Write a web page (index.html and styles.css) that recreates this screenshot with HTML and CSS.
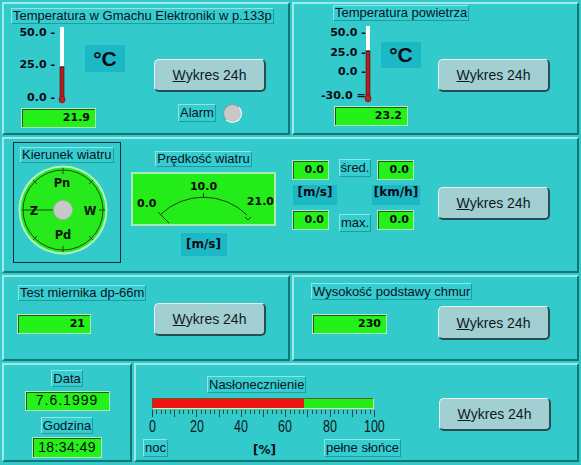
FILE: index.html
```html
<!DOCTYPE html>
<html lang="pl">
<head>
<meta charset="utf-8">
<title>Stacja meteorologiczna</title>
<link rel="stylesheet" href="styles.css">
</head>
<body>
<main class="screen">
  <div class="row halves">
    <section class="panel temp t1">
      <div class="lbl title">Temperatura w Gmachu Elektroniki w p.133p</div>
      <div class="scale">
        <div class="marks"><span>50.0 -</span><span>25.0 -</span><span>0.0 -</span></div>
        <svg class="tube" width="8" height="78" viewBox="0 0 8 78">
          <rect x="2" y="1" width="4" height="40" fill="#ffffff"/>
          <rect x="2" y="41" width="4" height="32" fill="#b01e1e" stroke="#4a1010" stroke-width="0.6"/>
          <line x1="2" y1="41" x2="6" y2="41" stroke="#1a1a1a" stroke-width="1"/>
          <ellipse cx="4" cy="73.5" rx="3" ry="3.5" fill="#c41f1f" stroke="#5a1414" stroke-width="0.6"/>
        </svg>
      </div>
      <div class="unit">°C</div>
      <button class="btn"><span class="u">W</span>ykres 24h</button>
      <div class="val">21.9</div>
      <div class="alarm"><span class="lbl">Alarm</span><span class="led"></span></div>
    </section>

    <section class="panel temp t2">
      <div class="lbl title">Temperatura powietrza</div>
      <div class="scale">
        <div class="marks"><span>50.0 -</span><span>25.0 -</span><span>0.0 -</span><span>-30.0 =</span></div>
        <svg class="tube" width="8" height="77" viewBox="0 0 8 77">
          <rect x="2" y="0" width="4" height="25" fill="#ffffff"/>
          <rect x="2" y="25" width="4" height="47" fill="#b01e1e" stroke="#4a1010" stroke-width="0.6"/>
          <line x1="2" y1="25" x2="6" y2="25" stroke="#1a1a1a" stroke-width="1"/>
          <ellipse cx="4" cy="72.5" rx="3" ry="3.5" fill="#c41f1f" stroke="#5a1414" stroke-width="0.6"/>
        </svg>
      </div>
      <div class="unit">°C</div>
      <button class="btn"><span class="u">W</span>ykres 24h</button>
      <div class="val">23.2</div>
    </section>
  </div>

  <section class="panel mid">
    <div class="wind">
      <div class="lbl">Kierunek wiatru</div>
      <svg class="compass" width="90" height="90" viewBox="0 0 90 90">
        <circle cx="45" cy="45" r="44.5" fill="#b4f2bc"/>
        <circle cx="45" cy="45" r="42.5" fill="#26ea1c"/>
        <circle cx="45" cy="45" r="40" fill="none" stroke="#1d4a1d" stroke-width="1"/>
        <g stroke="#1d4a1d" stroke-width="1">
          <line x1="45" y1="3" x2="45" y2="9"/>
          <line x1="45" y1="81" x2="45" y2="87"/>
          <line x1="81" y1="45" x2="87" y2="45"/>
          <line x1="71" y1="19" x2="75" y2="15"/>
          <line x1="19" y1="19" x2="15" y2="15"/>
          <line x1="71" y1="71" x2="75" y2="75"/>
          <line x1="19" y1="71" x2="15" y2="75"/>
          <line x1="4" y1="45" x2="45" y2="45"/>
        </g>
        <circle cx="45" cy="45" r="9.5" fill="#c8c8c8" stroke="#a8b0a8" stroke-width="0.8"/>
        <text class="ctext" x="44" y="22" text-anchor="middle">Pn</text>
        <text class="ctext" x="45" y="74" text-anchor="middle">Pd</text>
        <text class="ctext" x="72" y="49.5" text-anchor="middle">W</text>
        <text class="ctext" x="16" y="49.5" text-anchor="middle">Z</text>
      </svg>
    </div>

    <div class="speed">
      <div class="lbl">Prędkość wiatru</div>
      <div class="gauge">
        <svg width="141" height="50" viewBox="0 0 141 50">
          <g fill="none" stroke="#1d3d1d" stroke-width="1">
            <path d="M27 41 A62 62 0 0 1 114 41"/>
            <line x1="25" y1="38" x2="36" y2="49"/>
            <line x1="70.5" y1="19" x2="70.5" y2="24"/>
            <path d="M112 43 L115 46 L118 43"/>
          </g>
          <text class="gtext" x="70.5" y="16" text-anchor="middle">10.0</text>
          <text class="gtext" x="4" y="33">0.0</text>
          <text class="gtext" x="141" y="31" text-anchor="end">21.0</text>
        </svg>
      </div>
      <div class="unit-sm ms">[m/s]</div>
    </div>

    <div class="readout">
      <div class="val">0.0</div>
      <div class="lbl mini top">śred.</div>
      <div class="val c3">0.0</div>
      <div class="unit-sm u1">[m/s]</div>
      <div class="unit-sm u3">[km/h]</div>
      <div class="val r3">0.0</div>
      <div class="lbl mini bot">max.</div>
      <div class="val c3 r3">0.0</div>
    </div>

    <button class="btn"><span class="u">W</span>ykres 24h</button>
  </section>

  <div class="row halves">
    <section class="panel single s1">
      <div class="lbl title">Test miernika dp-66m</div>
      <div class="pair">
        <div class="val">21</div>
        <button class="btn"><span class="u">W</span>ykres 24h</button>
      </div>
    </section>
    <section class="panel single s2">
      <div class="lbl title">Wysokość podstawy chmur</div>
      <div class="pair">
        <div class="val">230</div>
        <button class="btn"><span class="u">W</span>ykres 24h</button>
      </div>
    </section>
  </div>

  <div class="row bottom">
    <section class="panel clock">
      <div class="lbl l-data">Data</div>
      <div class="val lcd date">7.6.1999</div>
      <div class="lbl l-godz">Godzina</div>
      <div class="val lcd time">18:34:49</div>
    </section>
    <section class="panel sun">
      <div class="insol">
        <div class="lbl">Nasłonecznienie</div>
        <div class="bar"><div class="fill" style="width:68.5%"></div></div>
        <div class="ticks"></div>
        <div class="nums"><span><i>0</i></span><span><i>20</i></span><span><i>40</i></span><span><i>60</i></span><span><i>80</i></span><span><i>100</i></span></div>
        <div class="legend">
          <span class="lbl">noc</span>
          <span class="pct">[%]</span>
          <span class="lbl">pełne słońce</span>
        </div>
      </div>
      <button class="btn"><span class="u">W</span>ykres 24h</button>
    </section>
  </div>
</main>
</body>
</html>
```

FILE: styles.css
```css
html, body {
  margin: 0;
  padding: 0;
}
body {
  background: #32caca;
  font-family: "Liberation Sans", Arial, sans-serif;
  font-size: 13px;
  color: #0a1222;
}
.screen {
  width: 581px;
  height: 465px;
  box-sizing: border-box;
  padding: 2px;
  display: grid;
  grid-template-rows: 133px 136px 86px 99px;
  row-gap: 2px;
  overflow: hidden;
}
.row {
  display: grid;
  column-gap: 2px;
}
.row.halves { grid-template-columns: 288px 287px; }
.row.bottom { grid-template-columns: 130px 445px; }

.panel {
  box-sizing: border-box;
  border: 2px solid;
  border-color: #9ee8e8 #117777 #117777 #9ee8e8;
  background: #32caca;
  min-width: 0;
  min-height: 0;
}

/* generic label box */
.lbl {
  box-sizing: border-box;
  height: 16px;
  line-height: 14px;
  padding: 0 1px;
  border: 1px solid;
  border-color: #8fe4e4 #1f9c9c #1f9c9c #8fe4e4;
  background: #36cdd0;
  white-space: nowrap;
  font-size: 13px;
}

/* green numeric display */
.val {
  box-sizing: border-box;
  width: 75px;
  height: 20px;
  background: #24f01a;
  border: 1px solid #b4ecbc;
  box-shadow: inset 1px 1px 0 #1f5a1f;
  font: bold 11px "DejaVu Sans", sans-serif;
  text-align: right;
  padding-right: 5px;
  line-height: 18px;
  color: #0a0a0a;
}

.unit {
  box-sizing: border-box;
  width: 40px;
  background: #1cb8c6;
  font: bold 21px "Liberation Sans", Arial, sans-serif;
  text-align: center;
  color: #0a0a14;
}
.unit-sm {
  box-sizing: border-box;
  height: 20px;
  line-height: 20px;
  background: #1cb8c6;
  font: bold 12px "DejaVu Sans", sans-serif;
  text-align: center;
  color: #0a0a14;
}

.btn {
  box-sizing: border-box;
  width: 112px;
  height: 33px;
  padding: 0;
  background: #a2d0d2;
  border: 1px solid;
  border-width: 1px 2px 2px 1px;
  border-color: #e4f6f6 #2b4d52 #2b4d52 #e4f6f6;
  border-radius: 5px;
  font: 14px "Liberation Sans", Arial, sans-serif;
  color: #101828;
  display: flex;
  align-items: center;
  justify-content: center;
}
.btn .u { text-decoration: underline; }

/* temperature panels */
.temp {
  display: grid;
  grid-template-rows: 20px 79px 1fr;
}
.t1 { grid-template-columns: 62px 84px 1fr; }
.t2 { grid-template-columns: 78px 64px 1fr; }
.temp .title {
  grid-column: 1 / -1;
  grid-row: 1;
  justify-self: start;
  align-self: start;
}
.t1 .title { margin: 4px 0 0 7px; }
.t2 .title { margin: 1px 0 0 39px; }

.scale {
  grid-column: 1;
  grid-row: 2;
  display: flex;
  align-items: flex-start;
  margin-top: 2px;
  align-self: start;
  justify-self: start;
}
.marks {
  display: grid;
  font: bold 11px "DejaVu Sans", sans-serif;
  line-height: 13px;
  text-align: right;
  color: #0a0a14;
  white-space: nowrap;
}
.t1 .marks {
  width: 41px;
  margin-left: 10px;
  grid-template-rows: 32px 33px 13px;
}
.t2 .marks {
  width: 43px;
  margin-left: 27px;
  grid-template-rows: 20px 19px 24px 13px;
}
.t1 .tube { margin-left: 3px; }
.t2 .tube { margin-left: 0; margin-top: 0; }

.temp .unit {
  grid-column: 2;
  grid-row: 2;
  align-self: start;
  justify-self: start;
}
.t1 .unit { margin: 21px 0 0 19px; height: 27px; line-height: 27px; }
.t2 .unit { margin: 18px 0 0 9px; height: 26px; line-height: 26px; }

.temp .btn {
  grid-column: 3;
  grid-row: 2;
  align-self: start;
  justify-self: start;
}
.t1 .btn { margin: 35px 0 0 4px; }
.t2 .btn { margin: 35px 0 0 2px; }

.temp .val {
  grid-column: 1 / 3;
  grid-row: 3;
  align-self: start;
  justify-self: start;
}
.t1 .val { margin: 5px 0 0 17px; }
.t2 .val { margin: 3px 0 0 40px; width: 74px; }

.alarm {
  grid-column: 3;
  grid-row: 3;
  display: flex;
  align-items: center;
  gap: 7px;
  margin-left: 28px;
  align-self: start;
  justify-self: start;
  height: 20px;
}
.alarm .lbl { height: 18px; line-height: 16px; }
.led {
  box-sizing: border-box;
  width: 19px;
  height: 19px;
  border-radius: 50%;
  background: #c8c8c8;
  border: 1px solid;
  border-color: #7c9c9c #eefafa #eefafa #7c9c9c;
}

/* middle panel */
.mid {
  display: flex;
  align-items: flex-start;
}
.wind {
  box-sizing: border-box;
  width: 108px;
  height: 121px;
  margin: 3px 0 0 9px;
  border: 1px solid #0d2c3c;
  display: flex;
  flex-direction: column;
  align-items: flex-start;
}
.wind .lbl { margin: 4px 0 0 6px; }
.compass { margin: 2px 0 0 4px; display: block; }
.ctext {
  font: bold 11.5px "DejaVu Sans", sans-serif;
  fill: #0a140a;
}
.speed {
  display: flex;
  flex-direction: column;
  align-items: center;
  width: 145px;
  margin: 12px 0 0 10px;
}
.gauge {
  box-sizing: border-box;
  width: 145px;
  height: 54px;
  margin-top: 5px;
  border: 2px solid #a6eab4;
  background: #24ec18;
}
.gauge svg { display: block; }
.gtext {
  font: bold 11px "DejaVu Sans", sans-serif;
  fill: #0a0a0a;
}
.speed .ms {
  margin-top: 7px;
  width: 46px;
  height: 23px;
  line-height: 23px;
}
.readout {
  display: grid;
  grid-template-columns: 46px 34px 48px;
  grid-template-rows: 21px 20px 22px;
  row-gap: 5px;
  margin: 20px 0 0 16px;
}
.readout .val {
  width: 37px;
  padding-right: 4px;
  grid-column: 1;
  grid-row: 1;
  align-self: end;
}
.readout .val.c3 { grid-column: 3; margin-left: 5px; }
.readout .val.r3 { grid-row: 3; align-self: start; }
.readout .mini {
  grid-column: 2;
  justify-self: center;
}
.readout .mini.top { grid-row: 1; align-self: start; height: 18px; line-height: 16px; }
.readout .mini.bot { grid-row: 3; align-self: end; height: 18px; line-height: 16px; }
.readout .u1 { grid-column: 1; grid-row: 2; width: 44px; margin-left: 1px; }
.readout .u3 { grid-column: 3; grid-row: 2; width: 48px; }
.mid .btn { margin: 48px 0 0 18px; }

/* third row */
.single {
  display: flex;
  flex-direction: column;
  align-items: flex-start;
}
.pair {
  display: flex;
  align-items: flex-start;
}
.s1 .title { margin: 8px 0 0 14px; }
.s1 .val { margin: 13px 0 0 13px; width: 74px; }
.s1 .btn { margin: 2px 0 0 63px; }
.s2 .title { margin: 6px 0 0 17px; height: 17px; line-height: 15px; }
.s2 .val { margin: 14px 0 0 18px; }
.s2 .btn { margin: 6px 0 0 51px; height: 34px; }

/* clock */
.clock {
  display: flex;
  flex-direction: column;
  align-items: center;
}
.clock .lbl { height: 17px; line-height: 15px; }
.l-data { margin-top: 5px; }
.lcd {
  font: 14px "Liberation Sans", Arial, sans-serif;
  text-align: center;
  padding: 0;
  color: #0a0a0a;
  letter-spacing: 1px;
}
.date { margin-top: 4px; width: 85px; }
.l-godz { margin-top: 6px; }
.time { margin-top: 3px; width: 70px; height: 21px; line-height: 19px; letter-spacing: 0.4px; }

/* insolation */
.sun {
  display: flex;
  align-items: flex-start;
}
.insol {
  display: flex;
  flex-direction: column;
  align-items: flex-start;
}
.insol > .lbl { margin: 11px 0 0 71px; height: 17px; line-height: 15px; }
.bar {
  box-sizing: border-box;
  width: 222px;
  height: 11px;
  margin: 5px 0 0 16px;
  background: #24ec18;
  border: 1px solid;
  border-color: #6a5a20 #e6f08a #e6f08a #6a5a20;
  display: flex;
}
.bar .fill {
  height: 100%;
  background: #ee1414;
}
.ticks {
  width: 223px;
  height: 7px;
  margin: 1px 0 0 16px;
  background:
    repeating-linear-gradient(90deg, #1d4a4a 0 1px, transparent 1px 22.2px) left top / 100% 7px no-repeat,
    repeating-linear-gradient(90deg, #1d4a4a 0 1px, transparent 1px 4.44px) left top / 100% 4px no-repeat;
}
.nums {
  width: 222px;
  height: 13px;
  margin: 3px 0 0 16px;
  display: flex;
  justify-content: space-between;
  font-size: 16px;
  line-height: 13px;
  color: #101820;
}
.nums span {
  width: 0;
  display: flex;
  justify-content: center;
}
.nums i {
  font-style: normal;
  display: inline-block;
  transform: scaleX(0.78);
}
.legend {
  display: flex;
  align-items: center;
  margin: 6px 0 0 7px;
}
.legend .lbl { height: 18px; line-height: 16px; }
.pct {
  margin: 3px 48px 0 85px;
  font: bold 12px "DejaVu Sans", sans-serif;
  color: #0a0a14;
}
.sun .btn { margin: 33px 0 0 38px; }
```
